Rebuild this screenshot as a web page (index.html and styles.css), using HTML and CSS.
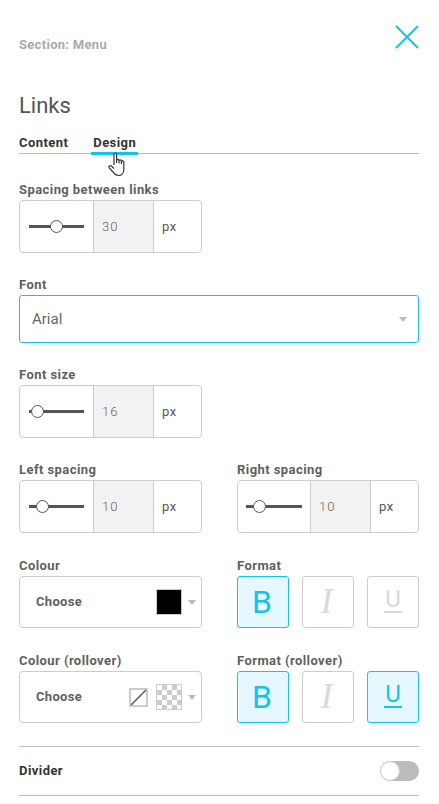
FILE: index.html
```html
<!DOCTYPE html>
<html>
<head>
  <title>Links</title>
  <link rel="stylesheet" href="styles.css">
</head>
<body>
  <div class="panel">
    <div class="panel-top">
      <span class="section-name">Section: Menu</span>
      <svg class="close-icon" width="24" height="24" viewBox="0 0 24 24"><path d="M1 1L23 23M23 1L1 23" fill="none" stroke="#13c4e8" stroke-width="2"/></svg>
    </div>
    <h1>Links</h1>
    <div class="tabs">
      <span class="tab">Content</span>
      <span class="tab active">Design</span>
      <svg class="hand" width="20" height="25" viewBox="0 0 20 25"><path d="M6 13V2.2C6 .6 8.6 .6 8.6 2.2V11M8.6 8.5C8.6 7 11 7 11 8.5V11.5M11 9C11 7.6 13.4 7.6 13.4 9V12M13.4 9.8C13.4 8.6 15.8 8.6 15.8 9.8V17C15.8 21 13.5 23.5 10.5 23.5C7.5 23.5 6.5 22 5 20L1.3 15.8C.2 14.4 2 12.8 3.4 14L6 16.5" fill="#fff" stroke="#333" stroke-width="1.2" stroke-linejoin="round"/></svg>
    </div>

    <div class="field">
      <label>Spacing between links</label>
      <div class="spinner single">
        <div class="slider"><span class="track"></span><span class="knob knob-30"></span></div>
        <div class="value">30</div>
        <div class="unit">px</div>
      </div>
    </div>

    <div class="field">
      <label>Font</label>
      <div class="select">
        <span>Arial</span>
        <span class="arrow"></span>
      </div>
    </div>

    <div class="field">
      <label>Font size</label>
      <div class="spinner single">
        <div class="slider"><span class="track"></span><span class="knob knob-16"></span></div>
        <div class="value">16</div>
        <div class="unit">px</div>
      </div>
    </div>

    <div class="columns">
      <div class="field">
        <label>Left spacing</label>
        <div class="spinner">
          <div class="slider"><span class="track"></span><span class="knob knob-10"></span></div>
          <div class="value">10</div>
          <div class="unit">px</div>
        </div>
      </div>
      <div class="field">
        <label>Right spacing</label>
        <div class="spinner narrow">
          <div class="slider"><span class="track"></span><span class="knob knob-10"></span></div>
          <div class="value">10</div>
          <div class="unit">px</div>
        </div>
      </div>
    </div>

    <div class="columns">
      <div class="field wide-gap">
        <label>Colour</label>
        <div class="color-box">
          <span class="choose">Choose</span>
          <span class="swatch black"></span>
          <span class="arrow"></span>
        </div>
      </div>
      <div class="field wide-gap">
        <label>Format</label>
        <div class="format">
          <div class="fmt on"><span class="b">B</span></div>
          <div class="fmt"><span class="i">I</span></div>
          <div class="fmt"><span class="u">U</span></div>
        </div>
      </div>
    </div>

    <div class="columns">
      <div class="field wide-gap">
        <label>Colour (rollover)</label>
        <div class="color-box">
          <span class="choose">Choose</span>
          <svg class="no-color" width="19" height="19" viewBox="0 0 19 19"><rect x="1" y="1" width="17" height="17" fill="#fff" stroke="#ccc" stroke-width="2"/><path d="M2 17L17 2" stroke="#555" stroke-width="1.4"/></svg>
          <span class="swatch checker"></span>
          <span class="arrow"></span>
        </div>
      </div>
      <div class="field wide-gap">
        <label>Format (rollover)</label>
        <div class="format">
          <div class="fmt on"><span class="b">B</span></div>
          <div class="fmt"><span class="i">I</span></div>
          <div class="fmt on"><span class="u">U</span></div>
        </div>
      </div>
    </div>

    <div class="divider-row">
      <span class="divider-name">Divider</span>
      <span class="toggle"><span class="toggle-knob"></span></span>
    </div>
  </div>
</body>
</html>
```

FILE: styles.css
```css
body {
  margin: 0;
  background-color: #fff;
  font-family: Roboto, "Liberation Sans", sans-serif;
  color: #555;
}

.panel {
  padding: 25px 20px 0 19px;
}

.panel-top {
  display: flex;
  justify-content: space-between;
  height: 24px;
}

.section-name {
  margin-top: 12px;
  font-size: 13px;
  line-height: 16px;
  font-weight: 700;
  letter-spacing: .3px;
  color: #aaa;
}

.close-icon {
  display: block;
}

h1 {
  margin: 42px 0 0;
  font-size: 22px;
  line-height: 30px;
  font-weight: 400;
  color: #555;
}

.tabs {
  position: relative;
  display: flex;
  gap: 25px;
  margin-top: 11px;
  height: 21px;
  border-bottom: 1px solid #bbb;
}

.tab {
  position: relative;
  font-size: 13px;
  line-height: 22px;
  font-weight: 700;
  letter-spacing: .43px;
  color: #333;
}

.tab.active::after {
  content: "";
  position: absolute;
  left: -2px;
  right: -2px;
  top: 20px;
  height: 3px;
  background-color: #13c4e8;
}

.hand {
  position: absolute;
  left: 89px;
  top: 20px;
}

.field {
  margin-top: 23px;
}

.wide-gap {
  margin-top: 24px;
}

.tabs + .field {
  margin-top: 27px;
}

label {
  display: block;
  height: 16px;
  margin-bottom: 3px;
  font-size: 13px;
  line-height: 18px;
  font-weight: 700;
  letter-spacing: .43px;
  color: #5f5f5f;
}

.spinner {
  display: flex;
  box-sizing: border-box;
  height: 53px;
  border: 1px solid #ccc;
  border-radius: 4px;
  overflow: hidden;
}

.single {
  width: 183px;
}

.slider {
  position: relative;
  width: 73px;
  flex-shrink: 0;
}

.track {
  position: absolute;
  left: 9px;
  width: 55px;
  top: 24px;
  height: 3px;
  background-color: #555;
}

.knob {
  position: absolute;
  top: 19px;
  box-sizing: border-box;
  width: 13px;
  height: 13px;
  border: 1px solid #555;
  border-radius: 50%;
  background-color: #fff;
}

.knob-30 { left: 30px; }
.knob-16 { left: 11px; }
.knob-10 { left: 16px; }

.narrow .slider {
  width: 72px;
}

.narrow .track {
  left: 8px;
  width: 56px;
}

.narrow .knob {
  left: 15px;
}

.value {
  box-sizing: border-box;
  width: 61px;
  flex-shrink: 0;
  padding-left: 8px;
  background-color: #f2f2f2;
  border-left: 1px solid #ccc;
  border-right: 1px solid #ccc;
  font-size: 13px;
  line-height: 51px;
  letter-spacing: 1px;
  font-weight: 300;
  color: #666;
}

.unit {
  padding-left: 8px;
  font-size: 13px;
  line-height: 51px;
  letter-spacing: .5px;
  color: #555;
}

.select {
  display: flex;
  align-items: center;
  justify-content: space-between;
  box-sizing: border-box;
  height: 48px;
  padding: 0 11px 0 12px;
  border: 1px solid #13c4e8;
  border-radius: 3px;
  font-size: 15px;
  color: #666;
}

.arrow {
  width: 0;
  height: 0;
  border-left: 4px solid transparent;
  border-right: 4px solid transparent;
  border-top: 5px solid #bbb;
}

.columns {
  display: grid;
  grid-template-columns: 183px 182px;
  column-gap: 35px;
}

.color-box {
  display: flex;
  align-items: center;
  box-sizing: border-box;
  height: 52px;
  padding: 0 5px 0 16px;
  border: 1px solid #ccc;
  border-radius: 4px;
}

.choose {
  margin: 0 auto 2px 0;
  font-size: 13px;
  font-weight: 700;
  letter-spacing: .3px;
  color: #5f5f5f;
}

.swatch {
  box-sizing: border-box;
  width: 26px;
  height: 26px;
  margin-right: 6px;
  border: 1px solid #ccc;
}

.black {
  background-color: #000;
}

.checker {
  background: repeating-conic-gradient(#ccc 0 25%, #fff 0 50%) 0 0 / 10px 10px;
}

.no-color {
  margin-right: 8px;
}

.format {
  display: flex;
  justify-content: space-between;
}

.fmt {
  display: flex;
  align-items: center;
  justify-content: center;
  box-sizing: border-box;
  width: 52px;
  height: 52px;
  border: 1px solid #ccc;
  border-radius: 3px;
  font-size: 32px;
  color: #d8d8d8;
}

.fmt.on {
  background-color: #e6f8fd;
  border-color: #13c4e8;
  color: #13c4e8;
}

.b {
  margin-right: 2px;
}

.i {
  font-family: "Liberation Serif", serif;
  font-size: 35px;
  font-style: italic;
  margin-right: 3px;
}

.u {
  font-size: 24px;
  line-height: 24px;
  padding: 0 1px;
  margin-bottom: 4px;
  border-bottom: 2px solid;
}

.divider-row {
  display: flex;
  align-items: center;
  justify-content: space-between;
  box-sizing: border-box;
  height: 50px;
  margin-top: 23px;
  border-top: 1px solid #bbb;
  border-bottom: 1px solid #bbb;
}

.divider-name {
  margin-bottom: 1px;
  font-size: 13px;
  font-weight: 700;
  letter-spacing: .43px;
  color: #333;
}

.toggle {
  display: block;
  width: 39px;
  height: 20px;
  border-radius: 10px;
  background-color: #bbb;
}

.toggle-knob {
  display: block;
  box-sizing: border-box;
  width: 20px;
  height: 20px;
  border: 1px solid #ccc;
  border-radius: 50%;
  background-color: #fff;
}
```
